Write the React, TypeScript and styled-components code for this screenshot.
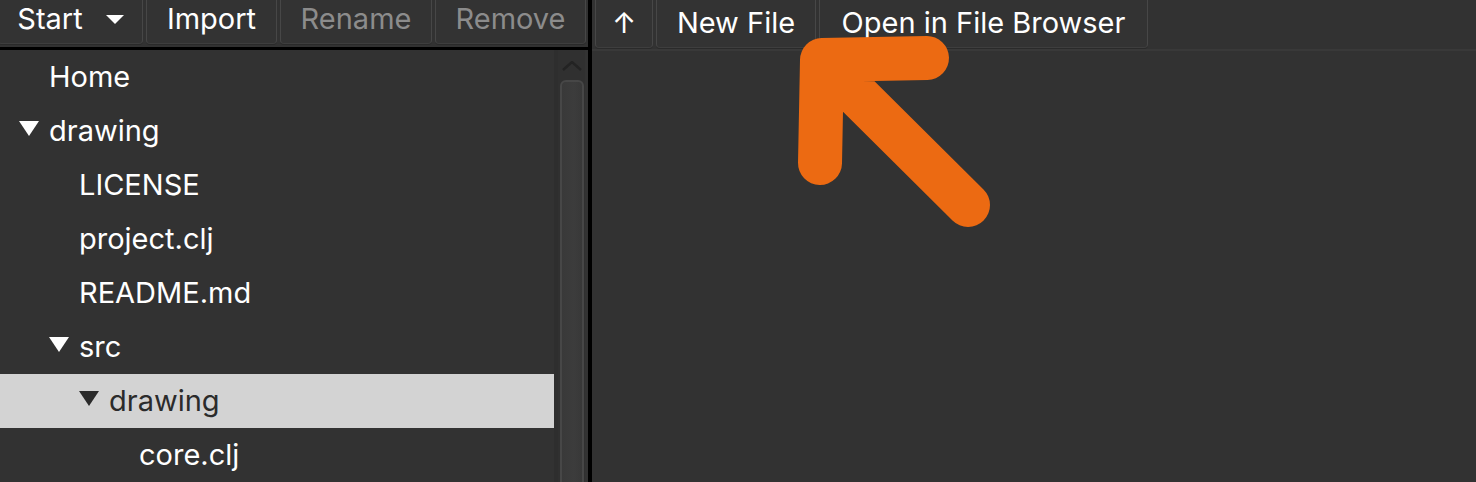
import React from "react";
import styled, { createGlobalStyle } from "styled-components";

const GlobalStyle = createGlobalStyle`
  html, body { margin: 0; padding: 0; background: #323232; }
  body { font-family: Inter, "Noto Sans", "Liberation Sans", sans-serif; }
  * { box-sizing: border-box; }
`;

const Frame = styled.div`
  display: flex;
  width: 1476px;
  height: 482px;
  overflow: hidden;
  background: #323232;
`;

const LeftPane = styled.div`
  width: 592px;
  flex: none;
  display: flex;
  flex-direction: column;
  border-right: 4px solid #000;
`;

const RightPane = styled.div`
  flex: 1;
  position: relative;
  display: flex;
  flex-direction: column;
`;

const Toolbar = styled.div<{ $dark?: boolean }>`
  display: flex;
  align-items: flex-end;
  gap: 3px;
  height: ${(p) => (p.$dark ? "50px" : "51px")};
  padding: ${(p) => (p.$dark ? "0 0 3px 0" : "0 0 1px 3px")};
  flex: none;
  border-bottom: ${(p) => (p.$dark ? "3px solid #000" : "2px solid #393939")};
`;

const ToolButton = styled.div<{ $disabled?: boolean; $w: number }>`
  width: ${(p) => p.$w}px;
  height: 52px;
  display: flex;
  align-items: center;
  justify-content: center;
  gap: 23px;
  padding-top: 1px;
  border: 1px solid #474747;
  border-bottom-color: #3e3e3e;
  border-radius: 4px;
  background: #333333;
  box-shadow: 0 1px 0 #2a2a2a;
  color: ${(p) => (p.$disabled ? "#8c8c8c" : "#ffffff")};
  font-size: 29px;
  white-space: nowrap;
  flex: none;
`;

const DropTriangle = styled.span`
  width: 0;
  height: 0;
  border-left: 9px solid transparent;
  border-right: 9px solid transparent;
  border-top: 9px solid #ffffff;
  margin-top: 2px;
`;

const Body = styled.div`
  flex: 1;
  display: flex;
  min-height: 0;
`;

const Tree = styled.div`
  flex: 1;
  display: flex;
  flex-direction: column;
  overflow: hidden;
`;

const Row = styled.div<{ $level: number; $selected?: boolean }>`
  height: 54px;
  flex: none;
  display: flex;
  align-items: center;
  padding-left: ${(p) => 19 + p.$level * 30}px;
  background: ${(p) => (p.$selected ? "#d3d3d3" : "transparent")};
  color: ${(p) => (p.$selected ? "#2b2b2b" : "#ffffff")};
  font-size: 29px;
  padding-bottom: 2px;
  white-space: nowrap;
`;

const Disclosure = styled.span<{ $selected?: boolean; $open?: boolean }>`
  width: 30px;
  flex: none;
  display: flex;
  align-items: center;
  &::before {
    content: "";
    display: ${(p) => (p.$open ? "block" : "none")};
    width: 0;
    height: 0;
    border-left: 10px solid transparent;
    border-right: 10px solid transparent;
    border-top: 15px solid ${(p) => (p.$selected ? "#2b2b2b" : "#ffffff")};
    margin-top: -4px;
  }
`;

const Scrollbar = styled.div`
  width: 34px;
  flex: none;
  display: flex;
  flex-direction: column;
  align-items: center;
  background: #303030;
  border-left: 4px solid #2e2e2e;
  border-right: 3px solid #333;
`;

const ScrollUp = styled.div`
  height: 30px;
  flex: none;
  display: flex;
  align-items: center;
  justify-content: center;
  padding-top: 2px;
`;

const Thumb = styled.div`
  width: 24px;
  flex: 1;
  border: 2px solid #474747;
  border-bottom: none;
  border-radius: 6px 6px 0 0;
  background: linear-gradient(90deg, #393939, #3c3c3c 60%, #383838);
`;

const Overlay = styled.svg`
  position: absolute;
  left: 178px;
  top: 20px;
  width: 240px;
  height: 230px;
  pointer-events: none;
`;

const items = [
  { label: "Home", level: 0 },
  { label: "drawing", level: 0, open: true },
  { label: "LICENSE", level: 1 },
  { label: "project.clj", level: 1 },
  { label: "README.md", level: 1 },
  { label: "src", level: 1, open: true },
  { label: "drawing", level: 2, open: true, selected: true },
  { label: "core.clj", level: 3 },
];

export default function App() {
  return (
    <>
      <GlobalStyle />
      <Frame>
        <LeftPane>
          <Toolbar $dark>
            <ToolButton $w={145} style={{ marginLeft: -2 }}>
              Start
              <DropTriangle />
            </ToolButton>
            <ToolButton $w={131}>Import</ToolButton>
            <ToolButton $w={152} $disabled>
              Rename
            </ToolButton>
            <ToolButton $w={151} $disabled>
              Remove
            </ToolButton>
          </Toolbar>
          <Body>
            <Tree>
              {items.map((it, i) => (
                <Row key={i} $level={it.level} $selected={it.selected}>
                  <Disclosure $open={it.open} $selected={it.selected} />
                  {it.label}
                </Row>
              ))}
            </Tree>
            <Scrollbar>
              <ScrollUp>
                <svg width="20" height="10" viewBox="0 0 20 10">
                  <path d="M1 9 L10 1 L19 9" fill="none" stroke="#232323" strokeWidth="2.5" />
                </svg>
              </ScrollUp>
              <Thumb />
            </Scrollbar>
          </Body>
        </LeftPane>
        <RightPane>
          <Toolbar>
            <ToolButton $w={58}>↑</ToolButton>
            <ToolButton $w={160}>New File</ToolButton>
            <ToolButton $w={329}>Open in File Browser</ToolButton>
          </Toolbar>
          <Overlay viewBox="0 0 240 230">
            <path
              d="M157 38 L52 40 L50 143 M52 40 L198 185"
              fill="none"
              stroke="#ec6a12"
              strokeWidth="44"
              strokeLinecap="round"
              strokeLinejoin="round"
            />
          </Overlay>
        </RightPane>
      </Frame>
    </>
  );
}
